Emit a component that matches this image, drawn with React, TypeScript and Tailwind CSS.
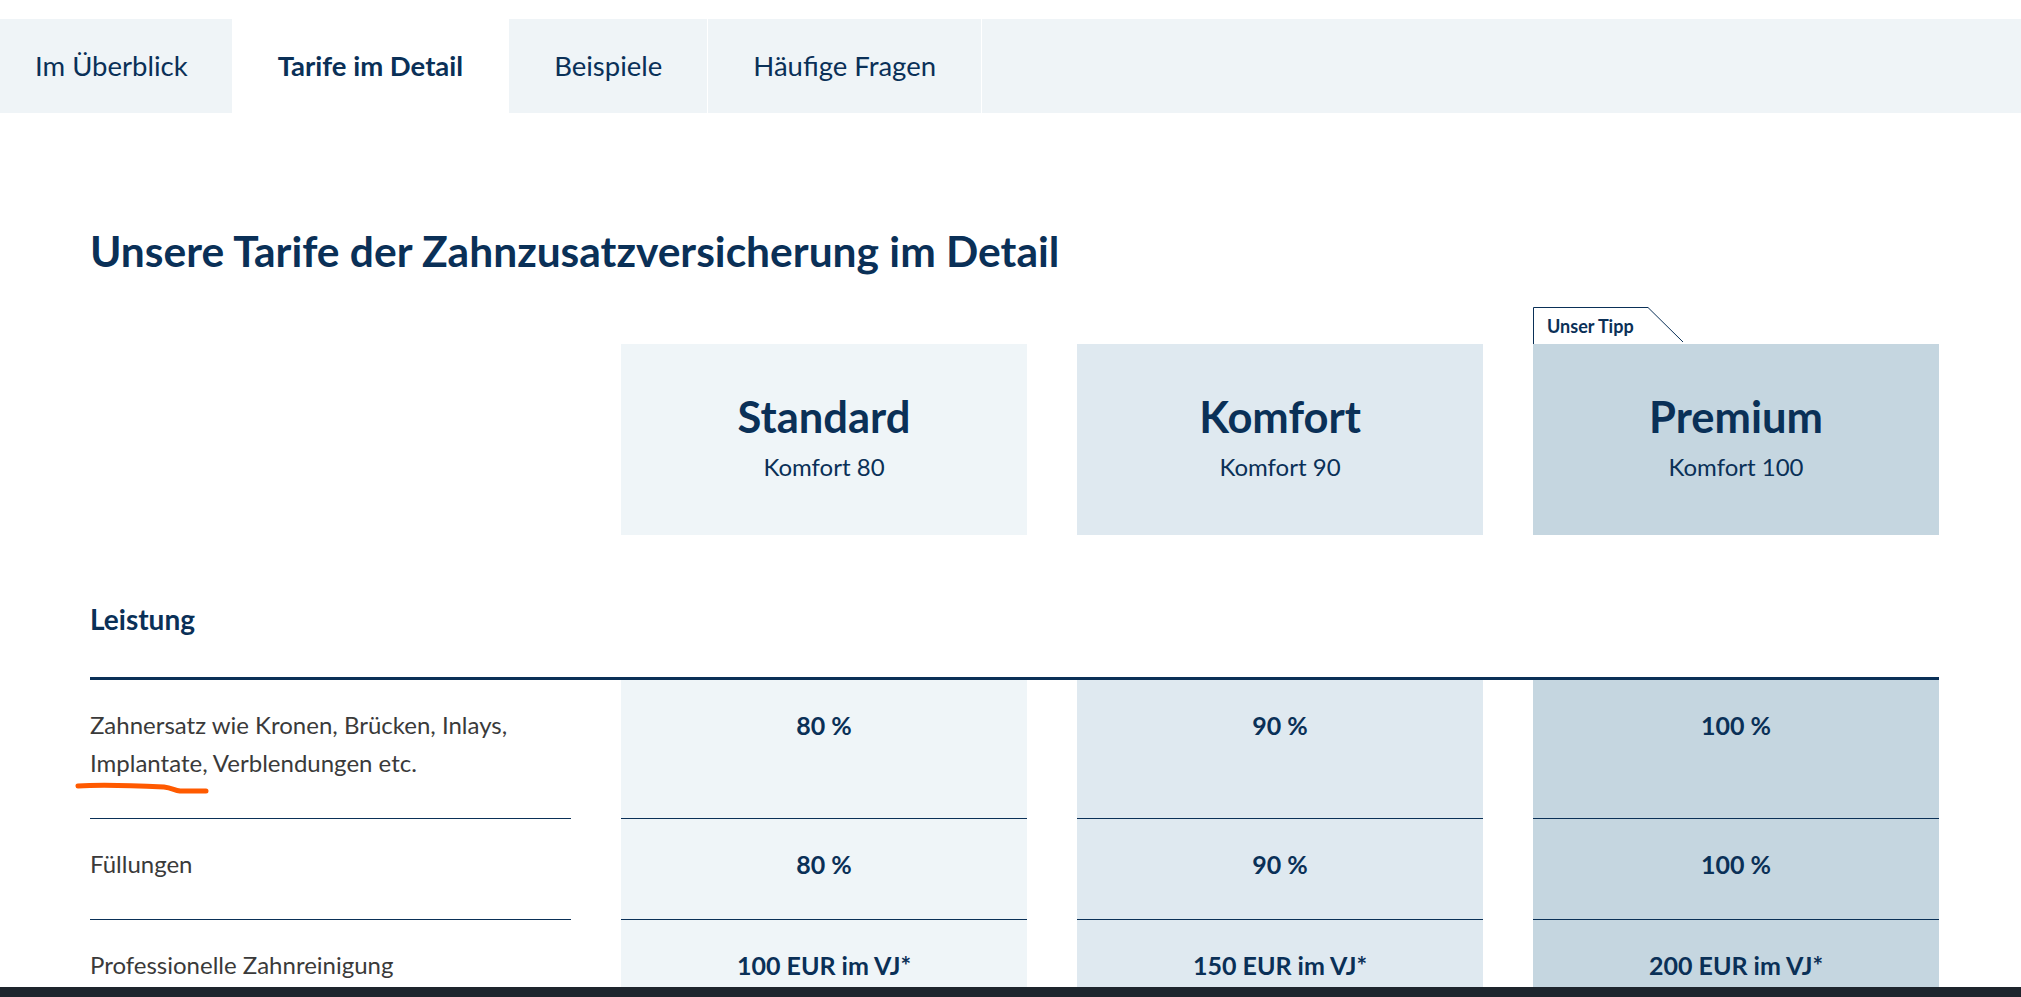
import React from "react";

const tabs = [
  { label: "Im Überblick", active: false, cls: "pl-[35px] pr-[44px]" },
  { label: "Tarife im Detail", active: true, cls: "px-[45px]" },
  { label: "Beispiele", active: false, cls: "px-[45px]" },
  { label: "Häufige Fragen", active: false, cls: "px-[45px]" },
];

const plans = [
  { name: "Standard", sub: "Komfort 80", bg: "bg-[#eff5f8]", tip: false },
  { name: "Komfort", sub: "Komfort 90", bg: "bg-[#dfe9f0]", tip: false },
  { name: "Premium", sub: "Komfort 100", bg: "bg-[#c5d6e0]", tip: true },
];

const rows = [
  {
    label: (
      <>
        Zahnersatz wie Kronen, Brücken, Inlays,
        <br />
        Implantate, Verblendungen etc.
      </>
    ),
    values: ["80 %", "90 %", "100 %"],
    h: "h-[139px]",
  },
  { label: "Füllungen", values: ["80 %", "90 %", "100 %"], h: "h-[101px]" },
  {
    label: "Professionelle Zahnreinigung",
    values: ["100 EUR im VJ*", "150 EUR im VJ*", "200 EUR im VJ*"],
    h: "h-[101px]",
  },
];

function UnserTipp() {
  return (
    <div className="relative h-[37px] w-[151px]">
      <svg className="absolute inset-0" width="151" height="37" viewBox="0 0 151 37">
        <path d="M0.5 37 V0.5 H115 L150 35" fill="#fff" stroke="#0a3057" strokeWidth="1" />
      </svg>
      <span className="relative block pl-[14px] pt-[8px] text-[18px] leading-[22px] font-bold text-[#0a3057]">
        Unser Tipp
      </span>
    </div>
  );
}

export default function App() {
  const tdCell = ["bg-[#eff5f8]", "bg-[#dfe9f0]", "bg-[#c5d6e0]"];
  return (
    <div
      className="relative w-full h-[997px] overflow-hidden bg-white flex flex-col"
      style={{ fontFamily: "Lato, 'Noto Sans', sans-serif" }}
    >
      {/* Tabs */}
      <div className="mt-[19px] h-[94px] flex bg-[#eff4f7] shrink-0">
        {tabs.map((t) => (
          <div
            key={t.label}
            className={`flex items-center border-r border-white text-[27.5px] text-[#0a3057] ${t.cls} ${
              t.active ? "bg-white font-bold" : ""
            }`}
          >
            {t.label}
          </div>
        ))}
      </div>

      <div className="ml-[90px] w-[1850px] flex-1">
        <h1 className="mt-[112px] text-[42.5px] leading-[52px] font-bold text-[#0a3057]">
          Unsere Tarife der Zahnzusatzversicherung im Detail
        </h1>

        <div className="mt-[30px] grid grid-cols-[481px_406px_406px_406px] gap-x-[50px]">
          {/* header */}
          <div />
          {plans.map((p) => (
            <div key={p.name} className="flex flex-col">
              <div className="h-[37px]">{p.tip && <UnserTipp />}</div>
              <div className={`h-[191px] ${p.bg} flex flex-col items-center pt-[47px] text-[#0a3057]`}>
                <div className="text-[43.5px] leading-[50px] font-bold">{p.name}</div>
                <div className="text-[24px] leading-[30px] mt-[11px]">{p.sub}</div>
              </div>
            </div>
          ))}

          {/* Leistung */}
          <div className="col-span-4 pt-[66px] pb-[40px] text-[28px] leading-[36px] font-bold text-[#0a3057]">
            Leistung
          </div>
          <div className="col-span-4 h-[3px] bg-[#0a3057]" />

          {rows.map((r, i) => (
            <React.Fragment key={i}>
              <div
                className={`${r.h} border-b border-[#0a3057] pt-[26px] text-[24px] leading-[38px] text-[#3a3a3a]`}
              >
                {r.label}
              </div>
              {r.values.map((v, j) => (
                <div
                  key={j}
                  className={`${r.h} ${tdCell[j]} border-b border-[#0a3057] pt-[26px] text-center text-[25px] leading-[38px] font-bold text-[#0a3057]`}
                >
                  {v}
                </div>
              ))}
            </React.Fragment>
          ))}
        </div>
      </div>

      {/* hand-drawn annotation */}
      <svg className="absolute left-[74px] top-[780px]" width="140" height="16" viewBox="0 0 140 16">
        <path
          d="M4 6 C30 4, 70 6, 90 7 C98 8, 100 10, 106 11 C115 11, 125 11, 132 11"
          fill="none"
          stroke="#ff5a00"
          strokeWidth="5"
          strokeLinecap="round"
        />
      </svg>

      {/* bottom taskbar strip */}
      <div className="absolute left-0 right-0 bottom-0 h-[10px] bg-[#1e252d]" />
    </div>
  );
}
